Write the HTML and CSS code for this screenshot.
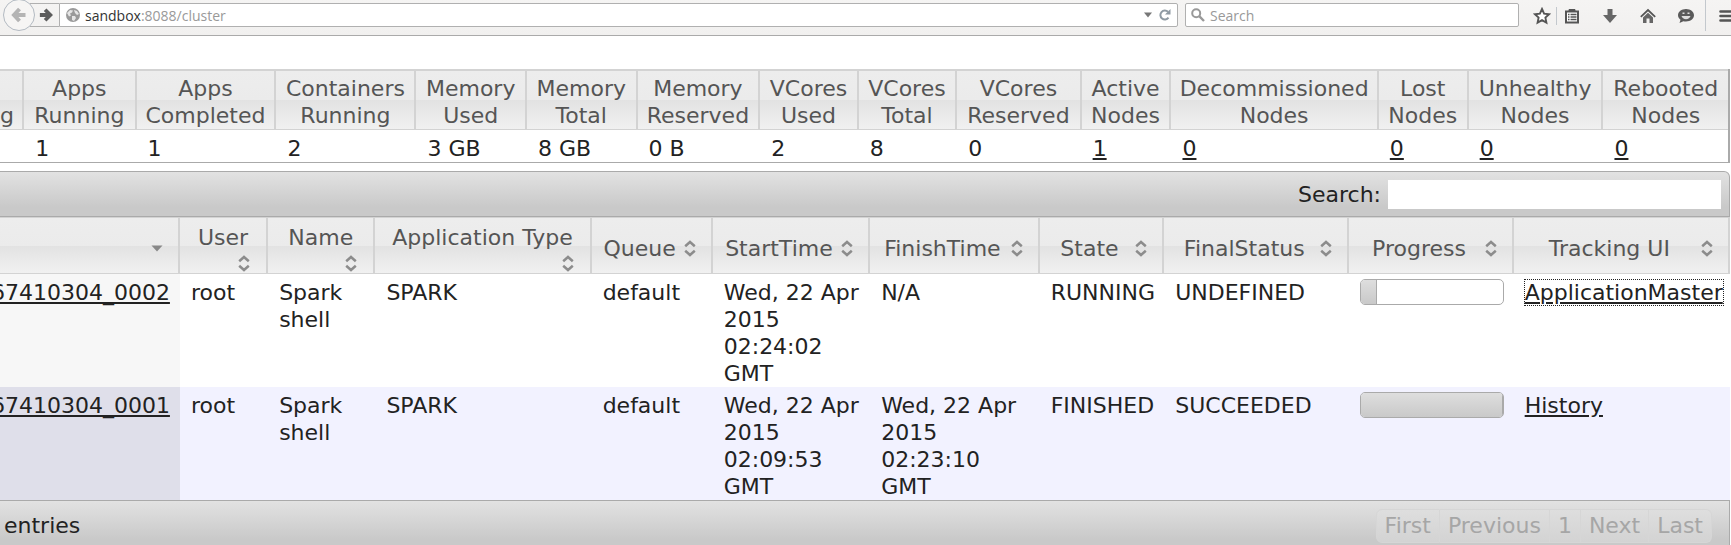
FILE: index.html
```html
<!DOCTYPE html>
<html lang="en">
<head>
<meta charset="utf-8">
<title>All Applications</title>
<link rel="stylesheet" href="styles.css">
</head>
<body>
<svg class="defs" aria-hidden="true">
  <symbol id="sort-both" viewBox="0 0 16 18"><path d="M3.200 7.200 8 3l4.800 4.200M3.200 11.800 8 16l4.800-4.200" fill="none" stroke="#8c8c8c" stroke-width="2.500"/></symbol>
  <symbol id="sort-desc" viewBox="0 0 16 18"><path d="M2.500 6.500h11L8 12.500z" fill="#888"/></symbol>
</svg>

<header class="chrome">
  <nav class="history">
    <button class="back" aria-label="Back"><svg width="16" height="16" viewBox="0 0 16 16"><path d="M8.500 2 3 8l5.500 6M3 8h11.500" fill="none" stroke="#b4b4b4" stroke-width="4"/></svg></button>
    <button class="forward" aria-label="Forward"><svg width="14" height="14" viewBox="0 0 16 16"><path d="M7 2l6 6-6 6M13 8H1" fill="none" stroke="#5c5c5c" stroke-width="4.400"/></svg></button>
  </nav>
  <div class="field url">
    <svg width="14" height="14" viewBox="0 0 14 14"><circle cx="7" cy="7" r="7" fill="#9a9a9a"/><path d="M1 5l3-3 3 .5-1 2-2 1 1 2-2 1zM8 2l3 1 2 3-2 1-2-2zM6 8l3 0 1 2-2 3-2-1z" fill="#e6e6e6"/></svg>
    <a class="address" href="#"><span class="host">sandbox</span>:8088/cluster</a>
    <button class="plain" aria-label="Show history"><svg width="8" height="6" viewBox="0 0 8 6"><path d="M0 .5h8L4 5.500z" fill="#777"/></svg></button>
    <button class="plain" aria-label="Reload"><svg width="12" height="12" viewBox="0 0 12 12"><path d="M9.500 8.700A4.500 4.500 0 1 1 9 2.800" fill="none" stroke="#8f9aa3" stroke-width="2"/><path d="M11.500 0v5.500H6z" fill="#8f9aa3"/></svg></button>
  </div>
  <div class="field search">
    <svg width="14" height="14" viewBox="0 0 14 14"><circle cx="5.200" cy="5.200" r="4" fill="none" stroke="#999" stroke-width="2"/><path d="M8.200 8.200 13 13" stroke="#999" stroke-width="2.400"/></svg>
    <input class="search-input" type="text" placeholder="Search" aria-label="Search">
  </div>
  <div class="tools">
    <button class="tool star" aria-label="Bookmark"><svg width="18" height="18" viewBox="0 0 18 18"><path d="M9 2l2.100 4.600 5 .6-3.700 3.400 1 5L9 13.100l-4.400 2.500 1-5L1.900 7.200l5-.6z" fill="#fff" stroke="#555" stroke-width="1.900"/></svg></button>
    <button class="tool marks" aria-label="Bookmarks list"><svg width="16" height="16" viewBox="0 0 16 16"><path d="M2 3.500h12v11H2z" fill="#fff" stroke="#555" stroke-width="2"/><path d="M5 3V1.500h6V3z" fill="#555" stroke="#555"/><path d="M4 6.500h1.500m1 0H12.500M4 9h1.500m1 0H12.500M4 11.500h1.500m1 0H12.500" stroke="#555" stroke-width="1.300"/></svg></button>
    <button class="tool" aria-label="Downloads"><svg width="16" height="16" viewBox="0 0 16 16"><path d="M5.500 1h5v6H15l-7 8L1 7h4.500z" fill="#666"/></svg></button>
    <button class="tool" aria-label="Home"><svg width="16" height="16" viewBox="0 0 16 16"><path d="M.8 8.800 8 2l7.200 6.800" fill="none" stroke="#555" stroke-width="1.800"/><path d="M3 9.500l5-4.800 5 4.800V15H9.500v-4.500h-3V15H3z" fill="#666"/></svg></button>
    <button class="tool" aria-label="Chat"><svg width="16" height="16" viewBox="0 0 16 16"><path d="M8 1c4.500 0 8 2.800 8 6.300s-3.500 6.200-8 6.200c-1 0-1.800-.1-2.600-.3L1.500 15l1-3.300C1 10.600 0 9 0 7.300 0 3.800 3.500 1 8 1z" fill="#5a5a5a"/><path d="M3.500 8h9c-.5 2-2.300 3.200-4.500 3.200S4 10 3.500 8z" fill="#ddd"/><path d="M4.500 5.200h2m3 0h2" stroke="#ddd" stroke-width="1.600"/></svg></button>
    <button class="menu" aria-label="Menu"><svg width="16" height="16" viewBox="0 0 16 16"><path d="M2.500 3.500h12M2.500 8h12M2.500 12.500h12" stroke="#555" stroke-width="2.600" stroke-linecap="round"/></svg></button>
  </div>
</header>

<main class="page">
  <table class="grid metrics">
    <colgroup><col class="m-edge"><col class="m-running"><col class="m-completed"><col class="m-containers"><col class="m-used"><col class="m-total"><col class="m-reserved"><col class="m-vused"><col class="m-vtotal"><col class="m-vreserved"><col class="m-active"><col class="m-decom"><col class="m-lost"><col class="m-unhealthy"><col></colgroup>
    <thead>
      <tr><th class="clip"><br>g</th><th>Apps<br>Running</th><th>Apps<br>Completed</th><th>Containers<br>Running</th><th>Memory<br>Used</th><th>Memory<br>Total</th><th>Memory<br>Reserved</th><th>VCores<br>Used</th><th>VCores<br>Total</th><th>VCores<br>Reserved</th><th>Active<br>Nodes</th><th>Decommissioned<br>Nodes</th><th>Lost<br>Nodes</th><th>Unhealthy<br>Nodes</th><th>Rebooted<br>Nodes</th></tr>
    </thead>
    <tbody>
      <tr><td></td><td>1</td><td>1</td><td>2</td><td>3 GB</td><td>8 GB</td><td>0 B</td><td>2</td><td>8</td><td>0</td><td><a href="#">1</a></td><td><a href="#">0</a></td><td><a href="#">0</a></td><td><a href="#">0</a></td><td><a href="#">0</a></td></tr>
    </tbody>
  </table>

  <section class="apps">
    <div class="bar bar-top">
      <label for="filter">Search:</label>
      <input id="filter" class="filter" type="text">
    </div>
    <table class="grid list">
      <colgroup><col class="a-id"><col class="a-user"><col class="a-name"><col class="a-type"><col class="a-queue"><col class="a-start"><col class="a-finish"><col class="a-state"><col class="a-final"><col class="a-progress"><col></colgroup>
      <thead>
        <tr>
          <th><button class="sort" aria-label="ID"><span></span><svg class="arrow"><use href="#sort-desc"/></svg></button></th>
          <th><button class="sort stacked"><span>User</span><svg class="arrow"><use href="#sort-both"/></svg></button></th>
          <th><button class="sort stacked"><span>Name</span><svg class="arrow"><use href="#sort-both"/></svg></button></th>
          <th><button class="sort stacked"><span>Application Type</span><svg class="arrow"><use href="#sort-both"/></svg></button></th>
          <th><button class="sort"><span>Queue</span><svg class="arrow"><use href="#sort-both"/></svg></button></th>
          <th><button class="sort"><span>StartTime</span><svg class="arrow"><use href="#sort-both"/></svg></button></th>
          <th><button class="sort"><span>FinishTime</span><svg class="arrow"><use href="#sort-both"/></svg></button></th>
          <th><button class="sort"><span>State</span><svg class="arrow"><use href="#sort-both"/></svg></button></th>
          <th><button class="sort"><span>FinalStatus</span><svg class="arrow"><use href="#sort-both"/></svg></button></th>
          <th><button class="sort"><span>Progress</span><svg class="arrow"><use href="#sort-both"/></svg></button></th>
          <th><button class="sort"><span>Tracking UI</span><svg class="arrow"><use href="#sort-both"/></svg></button></th>
        </tr>
      </thead>
      <tbody>
        <tr>
          <td class="id"><a href="#">67410304_0002</a></td><td>root</td><td>Spark shell</td><td>SPARK</td><td>default</td><td>Wed, 22 Apr 2015 02:24:02 GMT</td><td>N/A</td><td>RUNNING</td><td>UNDEFINED</td>
          <td><div class="progress"><div class="progress-fill" style="width: 11%"></div></div></td>
          <td><a class="focused" href="#">ApplicationMaster</a></td>
        </tr>
        <tr class="even">
          <td class="id"><a href="#">67410304_0001</a></td><td>root</td><td>Spark shell</td><td>SPARK</td><td>default</td><td>Wed, 22 Apr 2015 02:09:53 GMT</td><td>Wed, 22 Apr 2015 02:23:10 GMT</td><td>FINISHED</td><td>SUCCEEDED</td>
          <td><div class="progress"><div class="progress-fill" style="width: 100%"></div></div></td>
          <td><a href="#">History</a></td>
        </tr>
      </tbody>
    </table>
    <div class="bar bar-bottom">
      <span>entries</span>
      <nav class="pager"><button disabled>First</button><button disabled>Previous</button><button disabled>1</button><button disabled>Next</button><button disabled>Last</button></nav>
    </div>
  </section>
</main>
</body>
</html>
```
FILE: styles.css
```css
* { box-sizing: border-box; }

body {
  margin: 0;
  overflow: hidden;
  background: #fff;
  color: #222;
  font-family: "DejaVu Sans", sans-serif;
  font-size: 22px;
  line-height: 27px;
}

button {
  margin: 0;
  padding: 0;
  border: 0;
  background: none;
  color: inherit;
  font: inherit;
}

svg { display: block; flex: none; }
.defs { position: absolute; width: 0; height: 0; }
a { color: inherit; }

/* Browser bar */
.chrome {
  display: flex;
  align-items: flex-start;
  height: 36px;
  padding-left: 3px;
  border-bottom: 1px solid #aaa;
  background: linear-gradient(#f5f4f3, #f1f0ef);
  font-family: "Open Sans", sans-serif;
  font-size: 14px;
  line-height: 20px;
}

.history { display: flex; flex: none; }

.back {
  display: flex;
  align-items: center;
  justify-content: center;
  width: 32px;
  height: 32px;
  margin-top: -1px;
  border: 1px solid #b3bac2;
  border-radius: 50%;
  background: #f6f5f4;
  z-index: 1;
}

.forward {
  display: flex;
  align-items: center;
  justify-content: flex-end;
  width: 29px;
  height: 24px;
  margin: 3px 0 0 -5px;
  padding-right: 6px;
  border: 1px solid #b0b0b0;
  border-width: 1px 0;
}

.field {
  display: flex;
  align-items: center;
  gap: 5px;
  height: 24px;
  margin-top: 3px;
  padding: 0 5px;
  border: 1px solid #b0b0b0;
  border-radius: 0 2px 2px 0;
  background: #fff;
}

.url { flex: 1; padding-left: 6px; }
.address { flex: 1; padding-top: 1px; color: #999; text-decoration: none; }
.host { color: #333; }
.plain { padding: 0 1px; }

.search { width: 334px; margin-left: 7px; border-radius: 2px; }

.search-input {
  flex: 1;
  min-width: 0;
  padding: 1px 0 0;
  border: 0;
  outline: 0;
  background: none;
  font: inherit;
}

.search-input::placeholder { color: #999; opacity: 1; }

.tools { display: flex; flex: none; width: 212px; height: 31px; overflow: hidden; }

.tool {
  display: flex;
  flex: none;
  align-items: center;
  justify-content: center;
  width: 38px;
}

.star { justify-content: flex-end; }

.star::after {
  content: "";
  flex: none;
  width: 1px;
  height: 18px;
  margin-left: 5px;
  background: #c3c8cd;
}

.marks { width: 30px; margin-right: 4px; }

.menu {
  display: flex;
  flex: none;
  align-items: center;
  width: 38px;
  padding-left: 12px;
  border-left: 1px solid #c3c8cd;
}

/* Tables */
.page { padding: 33px 1px 0 0; }

.grid {
  width: 100%;
  border-spacing: 0;
  table-layout: fixed;
}

.grid th {
  padding: 0;
  border-right: 2px solid #d3d3d3;
  border-bottom: 1px solid #d3d3d3;
  background: linear-gradient(#ededed 0%, #ebebeb 50%, #e2e2e2 50%, #f1f1f1 100%);
  color: #555;
  font-weight: normal;
}

.grid td {
  padding: 5px 10px 0 11px;
  vertical-align: top;
}

.metrics { border-right: 2px solid #aaa; border-bottom: 1px solid #aaa; }
.metrics th { padding: 4px 0 0; border-top: 2px solid #d3d3d3; }
.metrics th:last-child { border-right: 0; }
.metrics .clip { padding-right: 12px; text-align: right; }

.m-edge { width: 1.4%; }
.m-running { width: 6.5%; }
.m-completed { width: 8.1%; }
.m-containers { width: 8.1%; }
.m-used, .m-total { width: 6.4%; }
.m-reserved { width: 7.1%; }
.m-vused, .m-vtotal { width: 5.7%; }
.m-vreserved { width: 7.2%; }
.m-active { width: 5.2%; }
.m-decom { width: 12%; }
.m-lost { width: 5.2%; }
.m-unhealthy { width: 7.8%; }

/* Applications */
.apps { margin-top: 8px; }

.bar {
  display: flex;
  align-items: center;
  border: 1px solid #aaa;
  border-left: 0;
  background: linear-gradient(#e2e2e2, #c9c9c9 80%);
}

.bar-top {
  justify-content: flex-end;
  gap: 7px;
  height: 46px;
  padding-right: 8px;
  border-radius: 0 6px 0 0;
}

.filter {
  width: 333px;
  height: 29px;
  padding: 0 4px;
  border: 0;
  font: inherit;
}

.list th { border-top: 1px solid #d3d3d3; }

.a-id { width: 10.4%; }
.a-user { width: 5.1%; }
.a-name { width: 6.2%; }
.a-type { width: 12.5%; }
.a-queue { width: 7%; }
.a-start { width: 9.1%; }
.a-finish { width: 9.8%; }
.a-state { width: 7.2%; }
.a-final { width: 10.7%; }
.a-progress { width: 9.5%; }

.sort {
  display: flex;
  align-items: center;
  width: 100%;
  height: 55px;
  padding: 5px 13px 0 6px;
}

.sort span { flex: 1; text-align: center; white-space: nowrap; }
.arrow { width: 16px; height: 18px; }

.stacked {
  flex-direction: column;
  align-items: stretch;
  gap: 3px;
  padding: 6px 14px 0;
}

.stacked span { flex: none; }
.stacked .arrow { align-self: flex-end; }

.id { background: #f7f7f7; }
.even td { background: #f2f2ff; }
.even .id { background: #dfdfea; }
.id a { display: flex; justify-content: flex-end; text-decoration: underline; }

.focused { outline: 1px dotted #222; }

.progress {
  width: 144px;
  height: 26px;
  border: 1px solid #aaa;
  border-radius: 5px;
  background: #fff;
  overflow: hidden;
}

.progress-fill {
  height: 100%;
  border-right: 1px solid #aaa;
  background: linear-gradient(#dedede, #c9c9c9);
}

.bar-bottom {
  justify-content: space-between;
  height: 50px;
  padding: 1px 17px 0 4px;
}

.pager { display: flex; }

.pager button {
  height: 34px;
  padding: 0 8px;
  border: 1px solid #d6d6d6;
  border-left-width: 0;
  background: linear-gradient(#dedede, #d3d3d3);
  color: #a6a6a6;
}

.pager button:first-child { border-left-width: 1px; border-radius: 6px 0 0 6px; }
.pager button:last-child { border-radius: 0 6px 6px 0; }
```
